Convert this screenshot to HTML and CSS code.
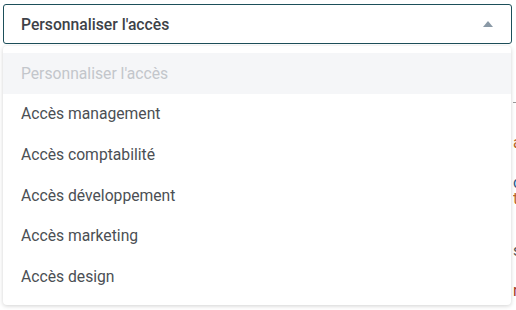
FILE: index.html
```html
<!DOCTYPE html>
<html lang="fr">

<head>
    <meta charset="UTF-8">
    <meta name="viewport" content="width=device-width, initial-scale=1.0">
    <title>Accès</title>
    <link rel="stylesheet" href="styles.css">
</head>

<body>
    <!-- page derrière le menu -->
    <div class="page">
        <div class="page__side">
            <span class="side__line"></span>
            <span class="c-orange l-a">a</span>
            <span class="c-blue l-c">c</span>
            <span class="c-orange l-t">t</span>
            <span class="c-gray l-s">s</span>
            <span class="c-red l-r">r</span>
        </div>
    </div>

    <!-- select -->
    <div class="select">
        <div class="select__head">
            <span>Personnaliser l'accès</span>
            <svg class="select__caret" width="10" height="6" viewBox="0 0 10 6">
                <path d="M0 6 L5 0 L10 6 Z" fill="#8a99a6" />
            </svg>
        </div>
        <ul class="select__menu">
            <li class="placeholder">Personnaliser l'accès</li>
            <li>Accès management</li>
            <li>Accès comptabilité</li>
            <li>Accès développement</li>
            <li>Accès marketing</li>
            <li>Accès design</li>
        </ul>
    </div>
</body>

</html>
```

FILE: styles.css
```css
* {
    margin: 0;
    padding: 0;
    box-sizing: border-box;
}

body {
    width: 516px;
    height: 310px;
    overflow: hidden;
    background-color: #fff;
    font-family: Roboto, "Liberation Sans", sans-serif;
    position: relative;
}

li {
    list-style: none;
}

.page {
    display: flex;
    justify-content: flex-end;
    height: 310px;
}

.page__side {
    width: 3px;
    display: flex;
    flex-direction: column;
    padding-top: 102px;
    font-size: 16px;
    line-height: 16px;
    overflow: hidden;
}

.page__side span {
    display: block;
    height: 16px;
}

.side__line {
    height: 1px !important;
    background-color: #999;
}

.l-a { margin-top: 32px; }
.l-c { margin-top: 24px; }
.l-t { margin-top: 0; }
.l-s { margin-top: 36px; }
.l-r { margin-top: 24px; }

.c-orange { color: #b8642a; }
.c-blue { color: #2a5a8a; }
.c-gray { color: #555; }
.c-red { color: #a33b2a; }

.select {
    position: absolute;
    top: 4px;
    left: 3px;
    width: 509px;
}

.select__head {
    height: 40px;
    border: 1px solid #1d4f5a;
    border-radius: 3px;
    background-color: #fff;
    display: flex;
    align-items: center;
    justify-content: space-between;
    padding: 0 18px 0 17px;
    font-size: 15.7px;
    font-weight: 500;
    color: #3d4248;
}

.select__caret {
    margin-top: -1px;
}

.select__menu {
    margin-top: 2px;
    width: 508px;
    background-color: #fff;
    border-radius: 4px;
    box-shadow: 0 1px 4px rgba(0, 0, 0, 0.18);
    padding: 7px 0 8px;
}

.select__menu li {
    height: 40.6px;
    display: flex;
    align-items: center;
    padding-left: 18px;
    font-size: 15.7px;
    color: #4b4f54;
}

.select__menu .placeholder {
    background-color: #f5f6f8;
    color: #c3c6cb;
}
```
